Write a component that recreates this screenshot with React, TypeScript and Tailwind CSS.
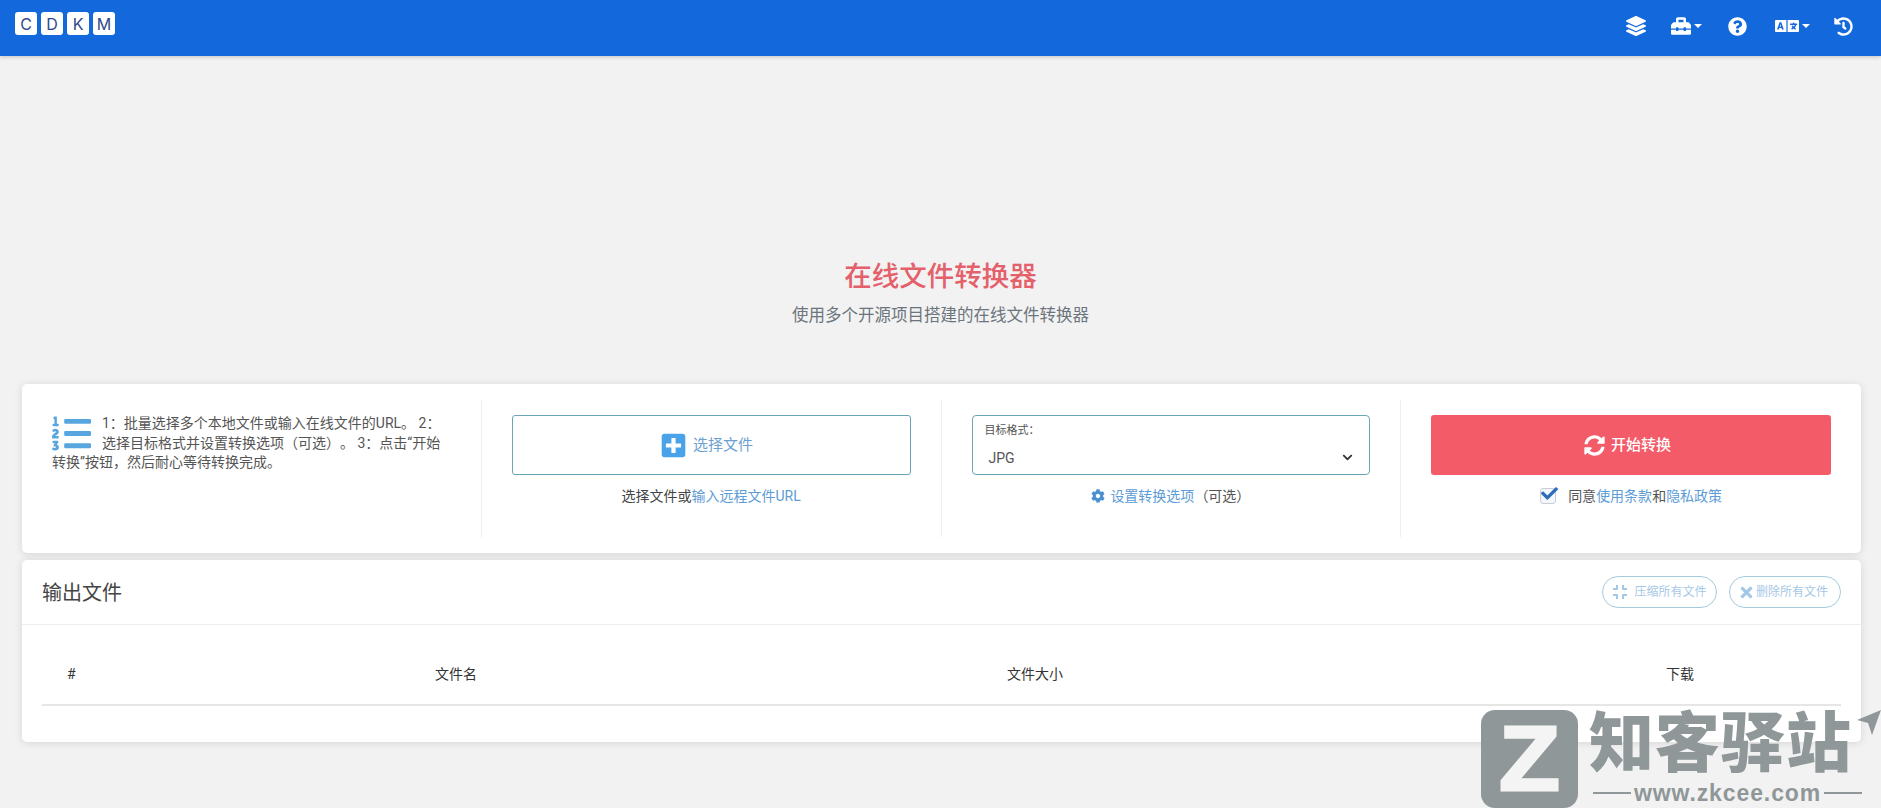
import {
  FaCheck,
  FaChevronDown,
  FaCog,
  FaCompress,
  FaHistory,
  FaLanguage,
  FaLayerGroup,
  FaListOl,
  FaPlusSquare,
  FaQuestionCircle,
  FaSyncAlt,
  FaTimes,
  FaToolbox,
} from "react-icons/fa"

const fontStack = "font-['Roboto','Noto_Sans_CJK_SC',sans-serif]"

function Caret() {
  return <span className="ml-[3px] h-0 w-0 border-x-[4px] border-t-[4px] border-x-transparent border-t-white" />
}

function Header() {
  return (
    <header className="relative z-10 flex h-14 items-center justify-between bg-[#1369dc] pb-[10px] pl-[15px] pr-[28px] pt-0 shadow-[0_1px_4px_rgba(0,0,0,0.2)]">
      <div className="flex gap-[4px] pt-[1px]">
        {["C", "D", "K", "M"].map((letter) => (
          <span
            key={letter}
            className="flex h-[23px] w-[22px] items-center justify-center rounded-[3px] bg-white font-['Inter',sans-serif] text-[16px] font-normal text-[#2f4a8a]"
          >
            {letter}
          </span>
        ))}
      </div>
      <nav className="flex items-center pt-[6px] text-white">
        <FaLayerGroup className="mr-[25px] text-[20px]" />
        <FaToolbox className="text-[20px]" />
        <Caret />
        <FaQuestionCircle className="ml-[26px] text-[19px]" />
        <FaLanguage className="ml-[28px] text-[24px]" />
        <Caret />
        <FaHistory className="ml-[24px] text-[19px]" />
      </nav>
    </header>
  )
}

function Hero() {
  return (
    <section className="pb-[56px] pt-[204px] text-center">
      <h1 className="text-[27.5px] font-medium leading-[34px] text-[#e4606a]">在线文件转换器</h1>
      <p className="mt-[10px] text-[16.5px] leading-6 text-[#6c757d]">使用多个开源项目搭建的在线文件转换器</p>
    </section>
  )
}

function ConvertCard() {
  return (
    <section className="ml-[22px] mr-[20px] grid h-[169px] grid-cols-4 rounded-[5px] bg-white py-4 shadow-[0_1px_8px_rgba(0,0,0,0.12)]">
      <div className="border-r border-[#eeeeee] px-[30px] pt-[14px] text-[14px] leading-[19.6px] text-[#555555]">
        <FaListOl className="float-left mr-[11px] text-[39px] text-[#58a6e0]" />
        1：批量选择多个本地文件或输入在线文件的URL。 2：选择目标格式并设置转换选项（可选）。 3：点击“开始转换”按钮，然后耐心等待转换完成。
      </div>

      <div className="border-r border-[#eeeeee] px-[30px] pt-[15px]">
        <button className="flex h-[60px] w-full items-center justify-center gap-[6px] rounded-[3px] border border-[#6ba5b8] pr-[9px] text-[15px] text-[#6ba1d0]">
          <FaPlusSquare className="text-[27px] text-[#4aa3e8]" />
          选择文件
        </button>
        <p className="mt-[11px] text-center text-[14px] leading-5 text-[#444444]">
          选择文件或<a className="text-[#5d9cd6]">输入远程文件URL</a>
        </p>
      </div>

      <div className="border-r border-[#eeeeee] px-[30px] pt-[15px]">
        <div className="relative h-[60px] rounded-[4px] border border-[#6ba5b8] pl-[12px] pt-[7px] text-[#555555]">
          <div className="text-[11px] leading-[16px]">目标格式：</div>
          <div className="ml-[4px] mt-[10px] text-[14px] leading-[18px]">JPG</div>
          <FaChevronDown className="absolute right-[16px] top-[36px] text-[11px] text-[#333333]" />
        </div>
        <p className="mt-[11px] flex items-center justify-center text-[14px] leading-5 text-[#555555]">
          <FaCog className="mr-[5px] text-[14px] text-[#4a8fd0]" />
          <a className="text-[#5d9cd6]">设置转换选项</a>（可选）
        </p>
      </div>

      <div className="px-[30px] pt-[15px]">
        <button className="flex h-[60px] w-full items-center justify-center gap-[6px] rounded-[3px] bg-[#f45b69] pr-[7px] text-[15px] font-medium text-white">
          <FaSyncAlt className="text-[21px]" />
          开始转换
        </button>
        <p className="mt-[11px] flex items-center justify-center text-[14px] leading-5 text-[#555555]">
          <span className="relative mr-[12px] h-[16px] w-[16px] rounded-[3px] border border-[#c9ced6] bg-[#f4f7fb]">
            <FaCheck className="absolute -top-[4px] left-0 text-[17px] text-[#2c6cb8]" />
          </span>
          同意<a className="text-[#5d9cd6]">使用条款</a>和<a className="text-[#5d9cd6]">隐私政策</a>
        </p>
      </div>
    </section>
  )
}

function OutputCard() {
  return (
    <section className="ml-[22px] mr-[20px] mt-[7px] h-[182px] rounded-[5px] bg-white shadow-[0_1px_8px_rgba(0,0,0,0.12)]">
      <div className="flex h-[65px] items-center justify-between border-b border-[#eeeeee] pl-[20px] pr-5">
        <h2 className="pt-[2px] text-[20px] font-normal text-[#444444]">输出文件</h2>
        <div className="flex gap-3 opacity-50">
          <button className="flex h-8 w-[115px] items-center justify-center gap-[6px] rounded-full border border-[#4a9cc0] text-[12px] text-[#4a90d0]">
            <FaCompress className="text-[16px]" />
            压缩所有文件
          </button>
          <button className="flex h-8 w-[112px] items-center justify-center gap-[1px] rounded-full border border-[#4a9cc0] pr-[4px] text-[12px] text-[#4a90d0]">
            <FaTimes className="text-[17px]" />
            删除所有文件
          </button>
        </div>
      </div>
      <div className="px-5 pt-[19px]">
        <table className="w-full table-fixed border-b-2 border-[#e6e6e6] text-left text-[14px] text-[#333333]">
          <thead>
            <tr className="h-[61px]">
              <th className="w-[368px] pl-[25px] font-normal">#</th>
              <th className="w-[572px] pl-[25px] font-normal">文件名</th>
              <th className="w-[659px] pl-[25px] font-normal">文件大小</th>
              <th className="pl-[25px] font-normal">下载</th>
            </tr>
          </thead>
        </table>
      </div>
    </section>
  )
}

function Watermark() {
  return (
    <div className="absolute left-[1481px] top-[710px] flex h-[98px] w-[400px]">
      <div className="flex h-[98px] w-[97px] items-center justify-center rounded-[14px] bg-[#8f9798]">
        <span className="scale-x-110 font-['Liberation_Sans',sans-serif] text-[90px] font-bold leading-[98px] text-[#f4f4f4] [-webkit-text-stroke:3px_#f4f4f4]">Z</span>
      </div>
      <div className="ml-[11px] flex w-[262px] flex-col items-start">
        <div className="flex h-[68px] w-full items-center justify-between text-[65px] font-black leading-none text-[#8f9798]">
          <span>知</span>
          <span>客</span>
          <span>驿</span>
          <span>站</span>
        </div>
        <div className="ml-[4px] mt-[3px] flex w-[269px] shrink-0 items-center gap-[3px]">
          <span className="h-[2px] flex-1 bg-[#8f9798]" />
          <span className="font-['Liberation_Sans',sans-serif] text-[23px] font-bold leading-[24px] tracking-[0.9px] text-[#8f9798]">www.zkcee.com</span>
          <span className="h-[2px] flex-1 bg-[#8f9798]" />
        </div>
      </div>
      <svg viewBox="0 0 24 25" className="ml-[6px] h-[25px] w-[24px] shrink-0 fill-[#8f9798]">
        <path d="M0 10 24 0 15 25 11 13Z" />
      </svg>
    </div>
  )
}

export default function App() {
  return (
    <div className={`relative h-[808px] overflow-hidden bg-[#f2f2f2] [text-spacing-trim:space-all] ${fontStack}`}>
      <Header />
      <Hero />
      <ConvertCard />
      <OutputCard />
      <Watermark />
    </div>
  )
}
